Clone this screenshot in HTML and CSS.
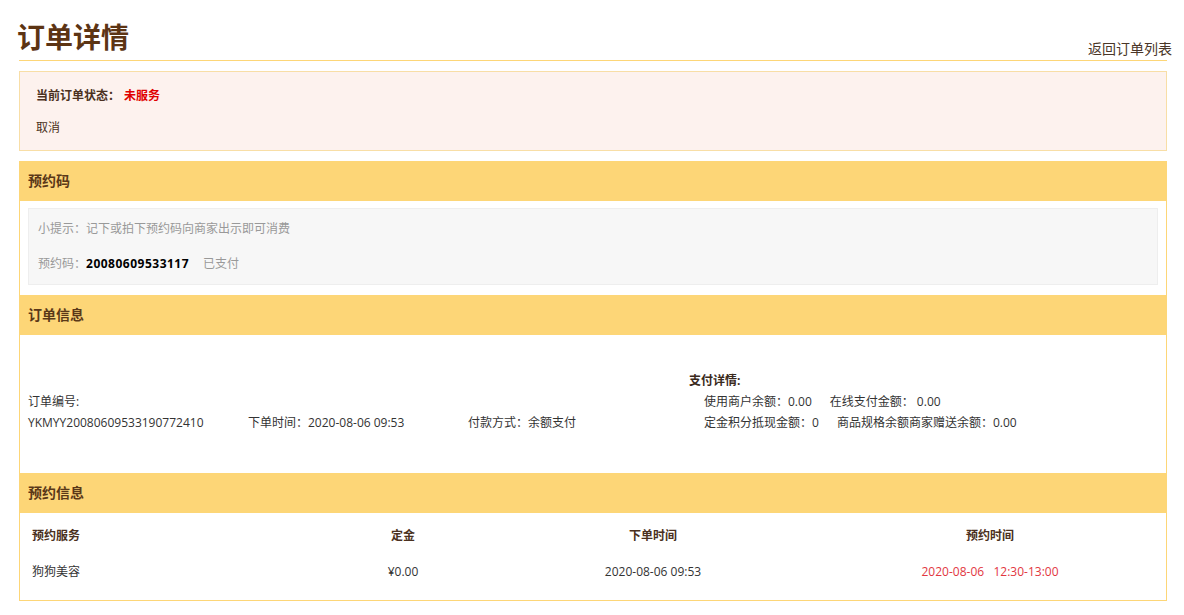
FILE: index.html
```html
<!DOCTYPE html>
<html lang="zh-CN">
<head>
<meta charset="utf-8">
<title>订单详情</title>
<link rel="stylesheet" href="styles.css">
</head>
<body>
<div class="page">
  <div class="page-head">
    <h1 class="page-title">订单详情</h1>
    <a class="back-link" href="#">返回订单列表</a>
  </div>

  <div class="status-box">
    <div class="status-line"><span class="status-label">当前订单状态：</span><span class="status-value">未服务</span></div>
    <div class="status-action">取消</div>
  </div>

  <div class="panel">
    <div class="panel-head">预约码</div>
    <div class="panel-body code-body">
      <div class="code-box">
        <div class="code-line">小提示：记下或拍下预约码向商家出示即可消费</div>
        <div class="code-line code-line-2">预约码：<span class="code-num">20080609533117</span><span class="code-paid">已支付</span></div>
      </div>
    </div>

    <div class="panel-head">订单信息</div>
    <div class="panel-body info-body">
      <div class="info-left">
        <div class="info-cell">
          <div>订单编号:</div>
          <div>YKMYY20080609533190772410</div>
        </div>
        <div class="info-cell">下单时间：2020-08-06 09:53</div>
        <div class="info-cell">付款方式：余额支付</div>
      </div>
      <div class="info-right">
        <div class="pay-title">支付详情:</div>
        <div class="pay-line"><span class="pay-item">使用商户余额：0.00</span><span>在线支付金额： 0.00</span></div>
        <div class="pay-line"><span class="pay-item">定金积分抵现金额：0</span><span>商品规格余额商家赠送余额：0.00</span></div>
      </div>
    </div>

    <div class="panel-head">预约信息</div>
    <div class="panel-body table-body">
      <div class="appt-table">
        <div class="cell th left">预约服务</div>
        <div class="cell th">定金</div>
        <div class="cell th">下单时间</div>
        <div class="cell th">预约时间</div>
        <div class="cell left">狗狗美容</div>
        <div class="cell">¥0.00</div>
        <div class="cell">2020-08-06 09:53</div>
        <div class="cell red">2020-08-06&nbsp;&nbsp;&nbsp;12:30-13:00</div>
      </div>
    </div>
  </div>
</div>
</body>
</html>
```

FILE: styles.css
```css
* {
  box-sizing: border-box;
}

html, body {
  margin: 0;
  padding: 0;
  background: #ffffff;
}

body {
  font-family: "Open Sans", "Noto Sans CJK SC", sans-serif;
  font-size: 12px;
  color: #333333;
}

.page {
  width: 1148px;
  margin-left: 19px;
}

.page-head {
  display: flex;
  justify-content: space-between;
  align-items: flex-end;
  padding-top: 16px;
  padding-bottom: 4px;
  border-bottom: 1px solid #fdd677;
}

.page-title {
  margin: 0 0 0 -2px;
  font-family: "Noto Sans CJK SC", sans-serif;
  font-size: 28px;
  line-height: 40px;
  font-weight: bold;
  color: #5c3414;
}

.back-link {
  font-size: 14px;
  line-height: 20px;
  color: #4a3628;
  text-decoration: none;
  margin-right: -5px;
  margin-bottom: -3px;
}

.status-box {
  margin-top: 10px;
  height: 80px;
  background: #fdf2ee;
  border: 1px solid #f8dea6;
  padding: 14px 16px 0 16px;
}

.status-line {
  line-height: 20px;
  font-weight: bold;
  color: #4a3020;
}

.status-value {
  color: #e00000;
  margin-left: 4px;
}

.status-action {
  margin-top: 12px;
  line-height: 20px;
  color: #4a3020;
}

.panel {
  margin-top: 10px;
  border: 1px solid #fdd677;
  border-top: none;
}

.panel-head {
  height: 40px;
  line-height: 40px;
  background: #fdd677;
  margin: 0 -1px;
  padding-left: 9px;
  font-size: 14px;
  font-weight: bold;
  color: #5a3818;
}

.code-body {
  padding: 7px 8px 10px 8px;
}

.code-box {
  background: #f7f7f7;
  border: 1px solid #eeeeee;
  padding: 10px 9px 10px 9px;
}

.code-line {
  line-height: 20px;
  color: #999999;
}

.code-line-2 {
  margin-top: 15px;
}

.code-num {
  font-weight: bold;
  color: #000000;
  letter-spacing: 0.5px;
  margin-right: 14px;
}

.info-body {
  display: flex;
  padding: 35px 8px 40px 8px;
}

.info-left {
  width: 661px;
  display: flex;
  align-items: flex-end;
}

.info-cell {
  width: 220px;
  line-height: 21px;
}

.info-right {
  flex: 1;
  line-height: 21px;
}

.pay-title {
  font-weight: bold;
  color: #3a2a1c;
}

.pay-line {
  padding-left: 15px;
}

.pay-item {
  margin-right: 18px;
}

.table-body {
  padding: 5px 8px 10px 8px;
}

.appt-table {
  display: grid;
  grid-template-columns: 294px 162px 338px 1fr;
}

.cell {
  height: 36px;
  line-height: 36px;
  text-align: center;
  white-space: nowrap;
}

.cell.left {
  text-align: left;
  padding-left: 4px;
}

.cell.th {
  font-weight: bold;
  color: #4a3020;
}

.cell.red {
  color: #e2373f;
}
```
